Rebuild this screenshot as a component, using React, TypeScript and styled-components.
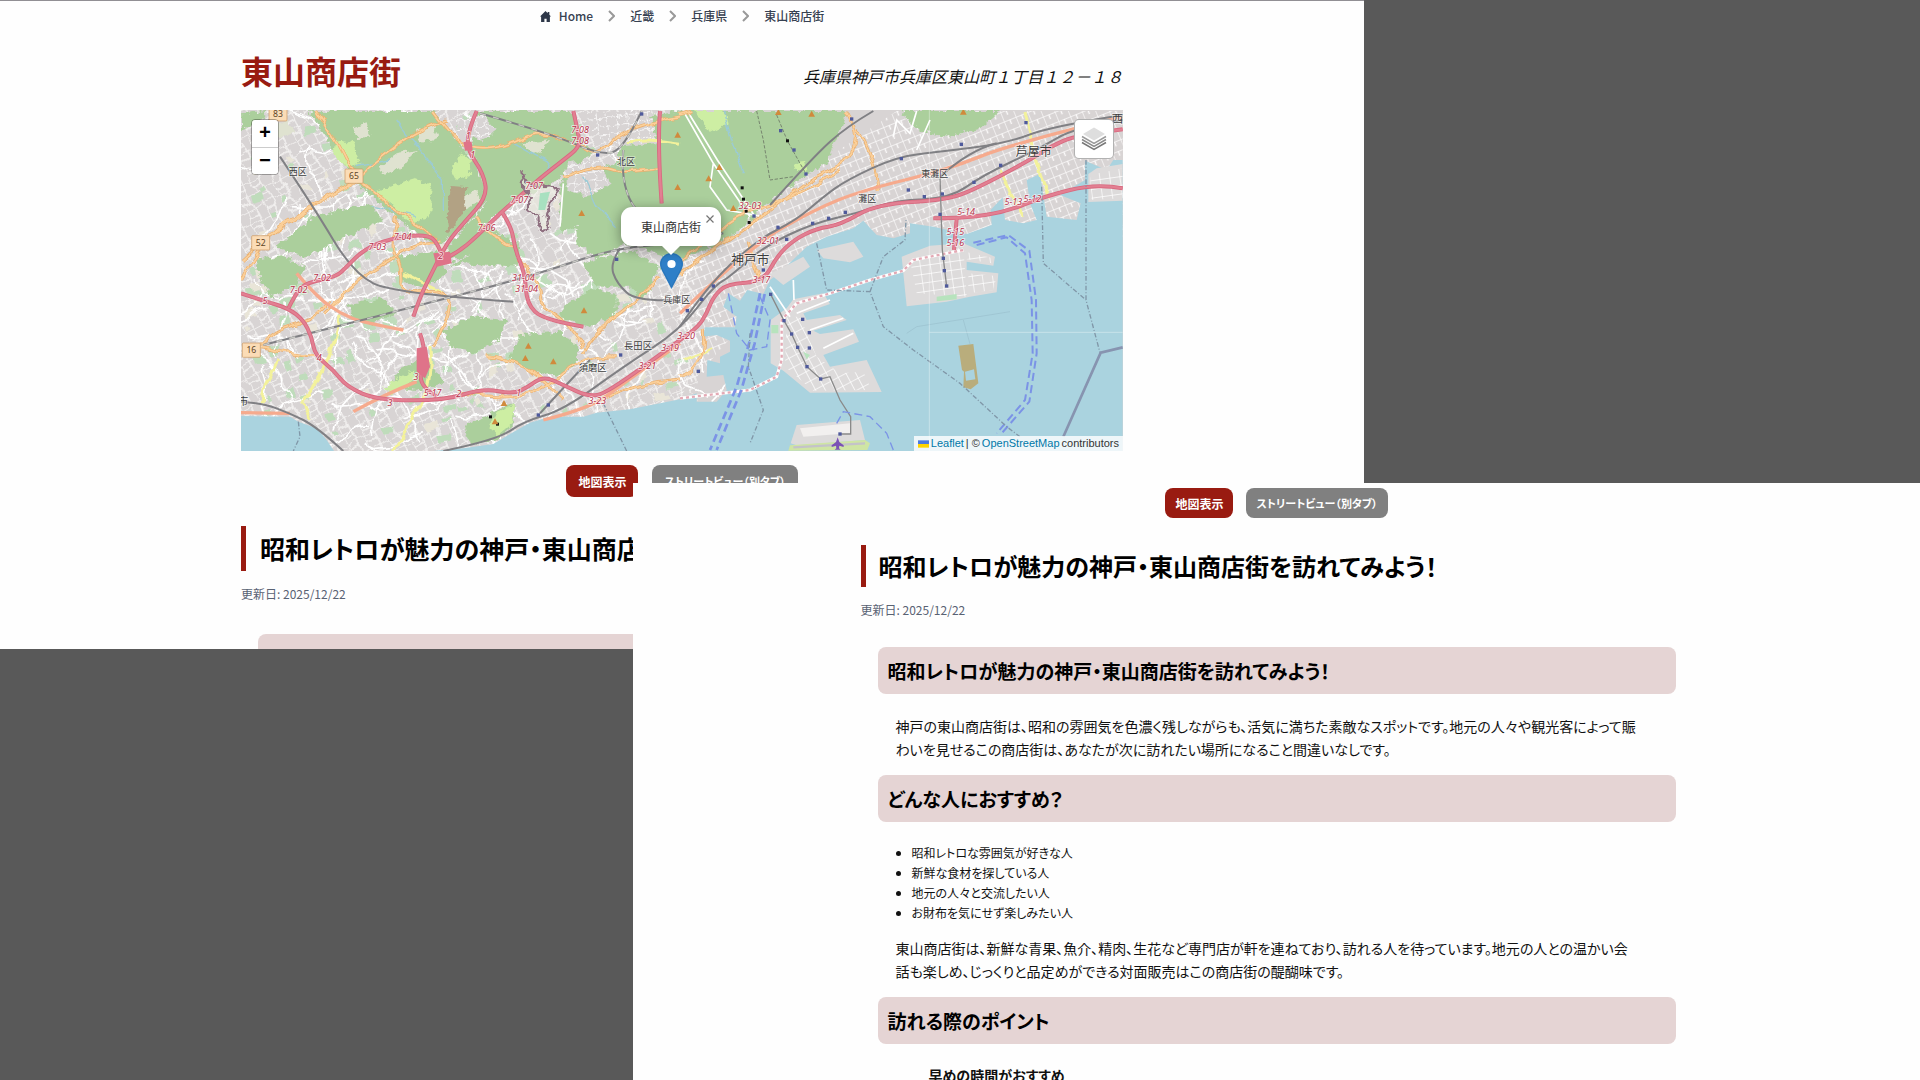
import React from "react";
import styled, { createGlobalStyle } from "styled-components";

const JP = `"Noto Sans CJK JP", "Noto Sans", sans-serif`;
const BRAND = "#991b11";

const GlobalStyle = createGlobalStyle`
  *, *::before, *::after { box-sizing: border-box; }
  body {
    margin: 0;
    background: #595959;
    color: #111;
    font-family: ${JP};
    font-feature-settings: "palt";
    line-break: strict;
  }
  h1, h2, h3, h4, p, ul, ol { margin: 0; padding: 0; }
  a { color: inherit; text-decoration: none; }
`;

/* Two overlapping page panes on a dark board */
const Board = styled.main`
  display: grid;
  height: 100vh;
  grid-template-columns: minmax(0, 633fr) minmax(0, 731fr) minmax(0, 556fr);
  grid-template-rows: minmax(0, 483fr) minmax(0, 166fr) minmax(0, 431fr);
`;

const Pane = styled.section<{ $front?: boolean }>`
  grid-column: ${(p) => (p.$front ? "2 / 4" : "1 / 3")};
  grid-row: ${(p) => (p.$front ? "2 / 4" : "1 / 3")};
  z-index: ${(p) => (p.$front ? 1 : 0)};
  overflow: hidden;
  background: #fefefe;
  border-top: ${(p) => (p.$front ? "0" : "1px solid #918f94")};
  padding-top: 5px;
`;

const Column = styled.div<{ $wide?: boolean }>`
  max-width: ${(p) => (p.$wide ? 882 : 832)}px;
  margin: 0 auto;
`;

const Crumbs = styled.ol`
  display: flex;
  justify-content: center;
  align-items: center;
  gap: 15px;
  list-style: none;
  font-size: 12px;
  line-height: 20px;
  font-weight: 500;
  color: #374151;
`;

const Crumb = styled.li`
  display: flex;
  align-items: center;
  gap: 15px;
  a { display: flex; align-items: center; gap: 8px; }
  svg { display: block; }
`;

const TitleRow = styled.header`
  display: flex;
  justify-content: space-between;
  align-items: flex-end;
  margin: 20px 0 16px;
`;

const PlaceName = styled.h1`
  font-size: 32px;
  line-height: 48px;
  font-weight: 700;
  color: ${BRAND};
`;

const Address = styled.address`
  font-size: 16px;
  line-height: 36px;
  font-feature-settings: normal;
`;

const MapFrame = styled.div`
  position: relative;
  height: 341px;
  overflow: hidden;
  background: #aad3df;
`;

const MapArt = styled.svg`
  display: block;
  width: 100%;
  height: 100%;
`;

const ZoomBar = styled.div`
  position: absolute;
  left: 10px;
  top: 9px;
  display: flex;
  flex-direction: column;
  border: 1px solid rgba(0, 0, 0, 0.3);
  border-radius: 4px;
  overflow: hidden;
`;

const ZoomButton = styled.button`
  width: 26px;
  height: 27px;
  padding: 0;
  border: 0;
  background: #fff;
  font: bold 20px/28px "Liberation Mono", monospace;
  color: #000;
  & + & { border-top: 1px solid #ccc; }
`;

const LayersButton = styled.button`
  position: absolute;
  right: 9px;
  top: 9px;
  width: 40px;
  height: 40px;
  padding: 0;
  display: grid;
  place-items: center;
  background: #fff;
  border: 1px solid rgba(0, 0, 0, 0.3);
  border-radius: 5px;
`;

/* Anchored to the marker's point on the map */
const Popup = styled.div`
  position: absolute;
  left: 430px;
  top: 97px;
  transform: translateX(-50%);
  width: 100px;
  height: 39px;
  border-radius: 11px;
  background: #fff;
  box-shadow: 0 3px 13px rgba(0, 0, 0, 0.4);
  display: grid;
  place-items: center;
  font-size: 12px;
  line-height: 16px;
  color: #333;
  &::after {
    content: "";
    position: absolute;
    left: 50%;
    top: 100%;
    margin-left: -9px;
    border: 9px solid transparent;
    border-top-color: #fff;
    border-bottom: 0;
  }
`;

const PopupClose = styled.button`
  position: absolute;
  right: 2px;
  top: 3px;
  width: 18px;
  height: 18px;
  padding: 0;
  border: 0;
  background: none;
  display: grid;
  place-items: center;
`;

const Pin = styled.svg`
  position: absolute;
  left: 419px;
  top: 143px;
`;

const Attribution = styled.div`
  position: absolute;
  right: 0;
  bottom: 0;
  display: flex;
  align-items: center;
  gap: 2px;
  height: 15px;
  padding: 0 4px;
  background: rgba(255, 255, 255, 0.8);
  font: 11px/15px "Liberation Sans", Arial, sans-serif;
  color: #333;
  a { color: #0078a8; }
`;

const Actions = styled.div<{ $wide?: boolean }>`
  display: flex;
  justify-content: center;
  gap: ${(p) => (p.$wide ? 14 : 13)}px;
  margin-top: ${(p) => (p.$wide ? 14 : 0)}px;
`;

const action = `
  display: flex;
  align-items: center;
  justify-content: center;
  border: 0;
  border-radius: 8px;
  color: #fff;
  font-family: inherit;
  font-weight: 700;
  font-feature-settings: inherit;
`;

const ShowMap = styled.button<{ $wide?: boolean }>`
  ${action}
  background: ${BRAND};
  height: ${(p) => (p.$wide ? 32 : 30)}px;
  padding: 0 ${(p) => (p.$wide ? 12 : 10)}px;
  font-size: 12px;
`;

const StreetView = styled.a<{ $wide?: boolean }>`
  ${action}
  background: #808080;
  height: ${(p) => (p.$wide ? 32 : 30)}px;
  padding: 0 ${(p) => (p.$wide ? 12 : 10)}px;
  font-size: 11px;
`;

const ArticleTitle = styled.h2<{ $wide?: boolean }>`
  margin-top: ${(p) => (p.$wide ? 29 : 27)}px;
  border-left: 5px solid ${BRAND};
  padding-left: ${(p) => (p.$wide ? 14 : 13)}px;
  font-size: ${(p) => (p.$wide ? 25 : 24)}px;
  line-height: ${(p) => (p.$wide ? 45 : 42)}px;
  font-weight: 700;
  color: #000;
  white-space: nowrap;
`;

const Updated = styled.p<{ $wide?: boolean }>`
  margin: 14px 0 ${(p) => (p.$wide ? 31 : 28)}px;
  font-size: 12px;
  line-height: 18px;
  color: #596273;
`;

const Body = styled.div`
  padding: 0 17px;
`;

const Band = styled.h3<{ $wide?: boolean }>`
  margin-bottom: 21px;
  padding: 0 10px;
  border-radius: 8px;
  background: #e5d4d4;
  font-size: 19px;
  line-height: ${(p) => (p.$wide ? 50 : 47)}px;
  font-weight: 700;
  color: #000;
`;

const Para = styled.p`
  margin: 0 18px 14px;
  font-size: 14px;
  line-height: 23px;
`;

const Bullets = styled.ul`
  margin: 0 18px 14px;
  padding-left: 16px;
  font-size: 12px;
  line-height: 20px;
`;

const Tip = styled.h4`
  margin-left: 51px;
  font-size: 14px;
  line-height: 21px;
  font-weight: 700;
`;

const chevron = (
  <svg width="7" height="12" viewBox="0 0 7 12" fill="none" stroke="#999" strokeWidth="2">
    <path d="M1 1l5 5-5 5" />
  </svg>
);

/* ---- map drawing ---- */

const LAND_WATER =
  "M33 948L180 950 205 965 260 985 290 1020 312 1053H33Z M610 1053L700 1045 790 1032 840 1002 900 968 960 950 1060 950 1100 938 1200 928 1350 898 1400 880V905H1460L1490 870 1480 825 1430 830 1432 780 1470 790V770L1500 755V722L1460 705 1420 710 1425 682H1515L1520 650 1480 620 1495 580 1530 602 1552 570 1600 582 1620 540 1650 518 1680 488 1730 440 1790 410 1870 385 1900 362 1940 405 1990 415 2040 400V370L2110 380 2210 402 2285 375 2282 330 2318 292 2325 360 2380 370 2420 360 2400 310 2390 240 2430 222 2450 350 2540 360 2552 310 2490 285 2565 240V182L2630 210 2650 180H2678V1053Z";

const ISLANDS = [
  "M2575 222L2600 205 2678 192V302L2575 306Z",
  "M2015 470L2100 437 2200 430 2295 470 2290 497 2210 485V510L2305 520 2300 577 2220 590 2150 605 2030 619Z",
  "M1760 450L1870 425 1900 470 1860 487 1780 475Z",
  "M1620 522L1720 470 1740 500 1660 555Z",
  "M1622 660L1670 625 1690 598 1780 580 1800 612 1720 640 1730 660 1830 645 1850 660 1750 692 1770 702 1870 688 1887 725 1780 765 1800 800 1910 780 1955 876 1740 878 1660 812 1622 790Z",
  "M1700 975L1890 960 1905 1020 1700 1036 1682 1030Z",
];

const FOREST = [
  "M235 33L610 33 690 130 750 220 768 300 700 385 622 440 520 372 470 330 370 240 300 130Z",
  "M740 33H1020L1045 110 1090 160 1000 220 960 260 870 290 760 375 850 425 660 480 648 445 768 312 750 200 722 150Z",
  "M995 240L1160 190 1200 60 1350 33H1850L1830 95 1790 185 1650 280 1590 330 1530 390 1420 450 1350 480 1180 430 1100 480 1040 430V380L990 400Z",
  "M2015 33H2310L2250 85 2150 110 2070 92 2035 62Z",
  "M870 702L990 695 1045 740 1040 790 980 830 890 810 840 770Z",
  "M1000 622L1080 570 1160 582V640L1080 682 990 650Z",
  "M75 485L150 465 222 500 200 560 125 592 88 530Z",
  "M355 612L460 595 500 640 420 672 370 655Z",
  "M705 980L800 930 855 908 848 980 800 1022 720 1030Z",
  "M250 350L420 310 460 360 330 420 230 470 140 440Z",
  "M500 470L620 452 650 520 600 560 520 550Z",
  "M640 690L720 650 830 660 800 720 740 760 660 740Z",
  "M1060 490L1200 450 1290 500 1240 600 1200 560 1100 560Z",
  "M520 800L590 770 640 850 560 870 480 860Z",
  "M650 500L780 430 870 430 860 500 700 490Z",
  "M33 40L110 33 90 70 33 90Z",
];

const GOLF = [
  "M430 275L560 235 608 262 600 350 540 372 500 330Z",
  "M320 120L370 130 385 190 350 205 310 160Z",
  "M690 160L722 180 720 225 680 240 668 215Z",
  "M460 860L545 815 560 840 480 885Z",
  "M1395 33H1480L1490 70 1440 95Z",
  "M1690 190L1725 185 1730 215 1695 212Z",
  "M800 935L855 912 845 975 805 1010 778 985Z",
];

const CLEARINGS = [
  "M450 200L500 160 560 150 520 200 460 225Z",
  "M560 90L610 75 625 110 570 130Z",
  "M700 290L740 270 750 300 705 330Z",
  "M880 130L960 120 930 160 900 150Z",
  "M100 90L170 60 190 100 130 120Z",
  "M370 85L410 70 420 110 380 115Z",
];

const MOTORWAYS = [
  "M740 33L715 90 712 150 760 220 772 290 700 370 650 430 610 510 570 590 550 650",
  "M1030 33L1045 100 1050 140 1000 180 930 235 880 280 815 335 740 410 680 460 640 478",
  "M640 478L625 430 590 402 480 415 400 450 350 500 320 530 230 548 200 575 175 625",
  "M33 580L100 602 175 625 220 660 245 710 255 765 310 810 350 860 440 900 640 902 760 865 850 882 895 860 940 828 1000 855 1075 890 1130 880 1350 720 1405 680 1430 640 1450 590 1490 552 1600 545 1640 470 1690 420 1760 385 1830 375 1940 312 2150 300 2240 265 2400 180 2460 140 2540 105 2678 88",
  "M815 335L845 380 855 450 885 520 890 610 940 660 1060 680",
  "M1290 33L1282 130 1295 310",
  "M2110 355L2200 355 2330 335 2440 290 2600 250 2678 265",
  "M2180 355L2172 450",
  "M570 700L585 740 575 800 570 840 590 870 620 890",
];

const TRUNKS = [
  "M200 520L260 590 330 640 400 668 520 690",
  "M33 938L180 940",
  "M940 960L1080 925 1180 850 1350 730",
  "M1350 640L1560 440 1750 330 1900 270 2150 210 2350 130 2678 50",
  "M370 935L460 885 560 845",
];

const PRIMARIES = [
  "M260 33L320 120 370 225 450 295 510 345 580 380 625 425",
  "M33 540L90 430 190 350 370 250 410 205 480 150 560 90 650 60",
  "M33 480L95 420 250 320",
  "M610 33L660 100 720 150 830 140 930 90 1030 130 1110 170 1180 80 1350 50",
  "M1000 230L1100 190 1190 220 1290 200",
  "M280 640L380 540 480 480 560 430 640 430",
  "M90 735L130 690 250 660 300 600",
  "M500 350L480 440 515 500 510 580 650 570 665 640 610 740",
  "M95 740L250 770",
  "M680 875L850 905 960 850 1070 770 1160 770",
  "M770 770L860 780 940 840 1000 900",
  "M740 350L760 400 860 440",
  "M870 480L940 560 920 610 1010 660 1060 740",
  "M1060 760L1110 680 1200 620 1290 530",
  "M1350 520L1480 430 1620 330 1750 230 1850 190 1890 100 1850 33",
  "M1350 490L1500 350 1700 290 1830 210",
  "M1350 44L1390 33",
  "M1880 90L1930 150 1945 270",
  "M1420 690L1430 800 1350 830",
  "M1555 430L1590 540",
  "M1110 900L1230 850 1350 840",
];

const YELLOWS = [
  "M330 650L325 760 215 905",
  "M150 780L95 850 97 910",
  "M600 740L605 850 550 950 490 1050",
  "M215 905L240 960",
  "M520 520L640 580",
  "M1190 130L1230 110 1350 130",
  "M2385 33L2400 110 2430 240 2460 290",
  "M1360 780L1450 745",
  "M2310 210L2380 350",
];

const RAILS = [
  "M150 170L250 320 370 520 490 580 850 605",
  "M100 735L400 660 550 620 900 530 1150 445 1350 430 1480 400",
  "M33 905L100 910 180 940 260 980 340 1053",
  "M640 1053L800 1020 880 965 1000 930 1180 800 1350 690 1450 560 1500 530 1600 440 1750 370 1880 340 2000 300 2160 295 2260 225 2420 150 2540 80 2678 60",
  "M750 40L960 100 1110 165 1180 150 1235 33",
  "M1180 150L1170 270 1220 330",
  "M1350 680L1430 560 1580 420 1700 360 1780 290 1850 240 2000 170 2130 155 2330 130 2460 80 2678 45",
  "M1620 315L1750 170 1850 80 1930 33",
  "M1170 445L1140 490 1160 550 1220 605 1340 600",
  "M930 940L1040 820 1080 780",
  "M2130 230L2220 150 2300 130",
];

const STATION_DOTS: [number, number][] = [
  [1865, 57], [1728, 222], [1692, 150], [1652, 92], [2014, 176], [2194, 133], [2035, 270], [2137, 282], [2083, 290],
  [1644, 382], [1748, 370], [1670, 418], [1572, 348], [2130, 343], [2140, 475], [2143, 512], [2150, 558], [1622, 583],
  [1662, 662], [1718, 658], [1685, 702], [1738, 698], [1703, 742], [1738, 744], [1731, 800], [1772, 837], [1830, 1002],
  [1405, 814], [1372, 632], [1450, 558], [1600, 510], [2312, 196], [2232, 247], [2388, 68], [1160, 478], [1235, 42],
  [1172, 765], [955, 915], [925, 945], [1846, 337], [1796, 355], [1415, 598], [1103, 165],
];

const PEAKS: [number, number][] = [
  [1343, 105], [1343, 262], [1645, 37], [1745, 42], [2200, 36], [1468, 202], [1436, 236], [1510, 325], [1055, 340],
  [895, 738], [886, 775], [970, 785], [1062, 632], [822, 910], [795, 965],
];

const PLACES: [string, number, number, number][] = [
  ["西区", 203, 226, 27],
  ["北区", 1188, 194, 27],
  ["兵庫区", 1340, 610, 27],
  ["長田区", 1224, 747, 28],
  ["須磨区", 1088, 814, 28],
  ["神戸市", 1561, 492, 38],
  ["灘区", 1912, 305, 27],
  ["東灘区", 2114, 232, 27],
  ["芦屋市", 2411, 168, 36],
  ["西", 2662, 70, 34],
  ["市", 40, 914, 30],
];

const EXITS: [string, number, number][] = [
  ["7-08", 1050, 99], ["7-08", 1050, 133], ["7-07", 912, 266], ["7-07", 868, 309], ["7-06", 770, 392],
  ["7-04", 518, 421], ["7-03", 442, 450], ["7-02", 276, 544], ["7-02", 206, 578], ["31-04", 880, 543],
  ["31-04", 890, 577], ["5-17", 608, 888], ["3-23", 1102, 913], ["3-21", 1252, 808], ["3-19", 1320, 752],
  ["3-20", 1368, 717], ["3-17", 1594, 548], ["32-01", 1614, 433], ["32-03", 1560, 326], ["5-12", 2407, 306],
  ["5-13", 2350, 314], ["5-14", 2208, 346], ["5-15", 2176, 404], ["5-16", 2176, 437],
  ["5", 105, 613], ["4", 268, 782], ["3", 480, 918], ["3", 558, 840], ["2", 686, 892], ["1", 866, 887], ["2", 632, 476], ["1", 715, 118], ["1", 728, 175],
];

const SHIELDS: [string, number, number][] = [
  ["83", 144, 42], ["65", 372, 229], ["52", 92, 429], ["16", 64, 751],
];

function seeded(seed: number) {
  let s = seed;
  return () => {
    s = (s * 1664525 + 1013904223) % 4294967296;
    return s / 4294967296;
  };
}

/* Rounds the corners of a polyline by running curves through its midpoints */
function smooth(d: string) {
  const n = (d.match(/-?\d+/g) || []).map(Number);
  const pts: [number, number][] = [];
  for (let i = 0; i + 1 < n.length; i += 2) pts.push([n[i], n[i + 1]]);
  if (pts.length < 3) return d;
  let out = `M${pts[0][0]} ${pts[0][1]}`;
  for (let i = 1; i < pts.length - 1; i++) {
    const last = i === pts.length - 2;
    const ex = last ? pts[i + 1][0] : (pts[i][0] + pts[i + 1][0]) / 2;
    const ey = last ? pts[i + 1][1] : (pts[i][1] + pts[i + 1][1]) / 2;
    out += `Q${pts[i][0]} ${pts[i][1]} ${ex} ${ey}`;
  }
  return out;
}

/* Winding local lanes scattered over the inland districts */
function lanes(count: number, seed: number, x0: number, y0: number, x1: number, y1: number, step: number) {
  const r = seeded(seed);
  let d = "";
  for (let i = 0; i < count; i++) {
    let x = x0 + r() * (x1 - x0);
    let y = y0 + r() * (y1 - y0);
    let a = r() * Math.PI * 2;
    d += `M${x.toFixed(0)} ${y.toFixed(0)}`;
    for (let k = 0; k < 7; k++) {
      a += (r() - 0.5) * 1.3;
      x += Math.cos(a) * step;
      y += Math.sin(a) * step;
      d += `L${x.toFixed(0)} ${y.toFixed(0)}`;
    }
  }
  return d;
}

function patches(count: number, seed: number) {
  const r = seeded(seed);
  let d = "";
  for (let i = 0; i < count; i++) {
    const x = 40 + r() * 1300;
    const y = 40 + r() * 980;
    const w = 10 + r() * 26;
    const h = 8 + r() * 22;
    d += `M${x.toFixed(0)} ${y.toFixed(0)}l${w.toFixed(0)} -6l6 ${h.toFixed(0)}l-${w.toFixed(0)} 8z`;
  }
  return d;
}

const Strokes = ({ paths, color, width, dash }: { paths: string[]; color: string; width: number; dash?: string }) => (
  <g fill="none" stroke={color} strokeWidth={width} strokeDasharray={dash} strokeLinejoin="round">
    {paths.map((d) => (
      <path key={d} d={smooth(d)} />
    ))}
  </g>
);

const CityMap = () => (
  <MapArt viewBox="33 30 2646 1023" preserveAspectRatio="xMidYMid slice" role="img" aria-label="神戸市周辺の地図">
    <defs>
      <pattern id="blocksA" width="58" height="40" patternUnits="userSpaceOnUse" patternTransform="rotate(-28)">
        <path d="M0 0H58M0 20H29M0 0V40M29 0V40" stroke="#f6f5f4" strokeWidth="4" fill="none" />
      </pattern>
      <pattern id="blocksB" width="38" height="30" patternUnits="userSpaceOnUse" patternTransform="rotate(-22)">
        <path d="M0 0H38M0 0V30M19 0V15" stroke="#fbfafa" strokeWidth="4" fill="none" />
      </pattern>
      <pattern id="blocksC" width="30" height="26" patternUnits="userSpaceOnUse" patternTransform="rotate(-8)">
        <path d="M0 0H30M0 0V26" stroke="#fff" strokeWidth="4" fill="none" />
      </pattern>
      <pattern id="blocksD" width="30" height="26" patternUnits="userSpaceOnUse" patternTransform="rotate(62)">
        <path d="M0 0H30M0 0V26" stroke="#fff" strokeWidth="4" fill="none" />
      </pattern>
      <filter id="organic" x="-5%" y="-5%" width="110%" height="110%">
        <feTurbulence type="fractalNoise" baseFrequency="0.05" numOctaves="3" seed="4" />
        <feDisplacementMap in="SourceGraphic" scale="26" xChannelSelector="R" yChannelSelector="G" />
      </filter>
      <filter id="wavy" x="-5%" y="-5%" width="110%" height="110%">
        <feTurbulence type="fractalNoise" baseFrequency="0.022" numOctaves="2" seed="9" />
        <feDisplacementMap in="SourceGraphic" scale="26" xChannelSelector="R" yChannelSelector="G" />
      </filter>
    </defs>

    <rect x="33" y="30" width="2646" height="1023" fill="#d8d4d4" />
    <g filter="url(#wavy)">
      <path d="M20 20H1400V1070H20Z" fill="url(#blocksA)" />
      <path d={patches(190, 5)} fill="#bfdcbb" />
      <path d={patches(80, 21)} fill="#e9e5d8" />
      <path d={lanes(150, 11, 33, 30, 1380, 1040, 26)} fill="none" stroke="#fff" strokeWidth="5" />
    </g>
    <path d="M1340 900V480L1600 310 1900 100 2000 33H2678V420L1900 420 1600 600Z" fill="url(#blocksB)" />

    <g filter="url(#organic)">
      <g fill="#abcf9c">
        {FOREST.map((d) => (
          <path key={d} d={d} />
        ))}
      </g>
      <g fill="#cdeea3">
        {GOLF.map((d) => (
          <path key={d} d={d} />
        ))}
      </g>
      <g fill="#dfe2d0">
        {CLEARINGS.map((d) => (
          <path key={d} d={d} />
        ))}
      </g>
      <path d="M665 258L712 262 706 320 680 370 655 400 650 330Z" fill="#b2a284" />
      <path d="M1070 40L1260 33 1280 130 1150 140 1080 90Z M1010 190L1110 180 1140 250 1080 290 1010 270Z M670 60L760 50 800 90 760 120 700 110Z" fill="#d8d4d4" />
      <path d="M1070 40L1260 33 1280 130 1150 140 1080 90Z M1010 190L1110 180 1140 250 1080 290 1010 270Z M670 60L760 50 800 90 760 120 700 110Z" fill="url(#blocksC)" />
    </g>

    <path d={LAND_WATER} fill="#aad3df" />
    <g fill="#dddbdb">
      {ISLANDS.map((d) => (
        <path key={d} d={d} />
      ))}
    </g>
    <path d="M1670 650L1710 650 1760 770 1830 820 1900 815 1925 870 1750 872 1665 800Z" fill="url(#blocksD)" />
    <path d="M2040 480L2200 440 2210 590 2060 580Z M2215 520L2300 528 2290 570 2215 580Z M2580 225L2678 205V295L2585 300Z M2205 455L2290 475 2285 490 2210 478Z" fill="url(#blocksC)" />
    <path d="M1680 1036L1905 1020 1920 1030 1912 1050 1675 1052Z" fill="#cfe5a4" />
    <path d="M1690 1042L1905 1030" stroke="#c4c3c9" strokeWidth="7" />
    <path d="M1710 985L1860 970V1000L1720 1010Z" fill="#f2f0ef" />
    <path d="M2185 737L2230 732 2245 850 2222 868 2200 862 2202 815 2196 810Z" fill="#b9ad7c" />
    <path d="M2205 815L2232 808 2236 838 2208 842Z" fill="#aad3df" />
    <path d="M2120 590L2180 582V598L2120 604Z M1720 755L1740 765 1730 778Z M1624 675L1645 675V700H1624Z" fill="#b7e3bd" />

    <g fill="none" stroke="#fff" strokeWidth="5">
      <path d="M1690 540L1692 600M1620 560L1680 650M1800 600L1700 640M1740 690L1840 655M1780 745L1870 700" />
      <path d="M1360 33L1450 190 1560 350 M1372 33L1462 180 1572 345M1450 190L1440 260 1490 330 1600 350M1990 110L2000 60 2040 100 2060 33M2060 150L2100 60" />
      <path d="M960 400L990 420 1040 430M860 500L960 510 1010 540 1030 590M1000 250L990 380" />
    </g>
    <path d="M1350 895L1560 870 1640 830 1655 780V660L1700 610 1800 580 1920 540 2020 512 2050 480 2200 450" fill="none" stroke="#fff" strokeWidth="9" />
    <path d="M1350 895L1560 870 1640 830 1655 780V660L1700 610 1800 580 1920 540 2020 512 2050 480 2200 450" fill="none" stroke="#e3a9b4" strokeWidth="7" strokeDasharray="9 9" />

    <g fill="none" stroke="#9bcbd6" strokeWidth="4" filter="url(#wavy)">
      <path d="M500 60L560 140 640 240 640 330M850 130L960 190 940 230M1060 230L1100 320 1160 380M1480 33L1500 100 1540 220M380 200L480 180M420 320L560 350" />
    </g>

    <g filter="url(#wavy)">
      <Strokes paths={YELLOWS} color="#f3f29b" width={9} />
      <Strokes paths={PRIMARIES} color="#eaae6c" width={9} />
      <Strokes paths={PRIMARIES} color="#fbd09a" width={5} />
    </g>
    <Strokes paths={TRUNKS} color="#f6aa8d" width={10} />
    <Strokes paths={RAILS} color="#808084" width={6} />
    <Strokes paths={RAILS.slice(1, 2)} color="#c9c9c4" width={4} dash="18 22" />
    <Strokes paths={RAILS.slice(4, 6)} color="#c9c9c4" width={4} dash="18 22" />
    <Strokes paths={MOTORWAYS} color="#d8697f" width={12} />
    <Strokes paths={MOTORWAYS} color="#e27f92" width={7} />
    <path d="M560 745L590 740 600 800 585 835 560 815Z M610 460L660 455 665 490 620 500Z M700 125L725 125 728 150 705 152Z" fill="#df7389" />
    <path d="M1622 583L1662 662 1685 702 1703 742 1731 800 1772 837 1800 830 1830 900 1862 950V1002H1830M2130 230L2137 450 2150 560" fill="none" stroke="#8a8a8a" strokeWidth="4" />

    <path d="M875 220L905 262 960 255 985 270 960 310 950 345 955 385 930 392 925 350 890 325 905 290 880 265Z" fill="#e9eadf" fillOpacity=".7" stroke="#8f6f80" strokeWidth="7" filter="url(#organic)" />
    <path d="M930 280L960 275 945 330 925 330Z" fill="#a8e0c0" />

    <g fill="none" stroke="#7b93e6" strokeWidth="8" strokeDasharray="24 13">
      <path d="M1590 580L1560 720 1520 860 1440 1050M1604 582L1574 730 1534 870 1460 1050" />
      <path d="M2240 435L2330 412 2385 460 2405 600 2408 760 2385 900 2300 1000M2230 428L2335 405 2398 452 2418 600 2420 760 2398 905 2315 1000" strokeWidth="6" />
      <path d="M1495 580L1520 700 1560 750 1610 740 1620 660 1590 590M1820 970L1840 935 1920 950 1970 1000 1990 1050" strokeWidth="4" />
    </g>
    <g fill="none" stroke="#8097a8" strokeWidth="4" strokeDasharray="14 6 3 6">
      <path d="M2435 260L2440 490 2568 600M2568 180V600L2610 758M1760 430L1790 570 1920 575 1960 680 2050 750 2190 850 2330 980 2370 1010M1920 575L1960 470 2025 420 2028 360M1560 700L1555 800 1600 930 1560 1030M1120 910L1190 1053M205 965L210 1010 190 1053" />
    </g>
    <path d="M2678 742L2612 758 2500 1010" fill="none" stroke="#8794b0" strokeWidth="8" />
    <path d="M2030 700L2060 680 2340 635M2200 660L2220 732" fill="none" stroke="#9abfcd" strokeWidth="2" />
    <path d="M2098 30V1053M2098 697H2678" stroke="#fff" strokeOpacity=".35" strokeWidth="3" />
    <path d="M1580 33L1600 120 1620 240 1690 230M1640 45L1672 122 1728 222" fill="none" stroke="#77866f" strokeWidth="3" strokeDasharray="10 5" />

    <g fill="#4f5a9c">
      {STATION_DOTS.map(([x, y]) => (
        <rect key={`${x}-${y}`} x={x - 5} y={y - 5} width="10" height="10" />
      ))}
    </g>
    <g fill="#111">
      {[[1672, 122], [1536, 263], [1540, 297], [1548, 333], [1557, 367], [781, 950], [802, 972]].map(([x, y]) => (
        <rect key={`${x}-${y}`} x={x - 4} y={y - 4} width="9" height="9" />
      ))}
    </g>
    <g fill="#d08a3c">
      {PEAKS.map(([x, y]) => (
        <path key={`${x}-${y}`} d={`M${x} ${y - 10}l10 18h-20z`} />
      ))}
    </g>
    <path d="M1823 1012l5 14 13 10v5l-13-4-1 8 5 4h-18l5-4-1-8-13 4v-5l13-10z" fill="#7b52b5" />

    <g fontFamily="Noto Sans CJK JP, sans-serif" textAnchor="middle" fill="#3d3d3d" stroke="#fff" strokeOpacity=".6" strokeWidth="5" paintOrder="stroke">
      {PLACES.map(([name, x, y, size]) => (
        <text key={name} x={x} y={y} fontSize={size}>
          {name}
        </text>
      ))}
    </g>
    <g fontFamily="Noto Sans, sans-serif" fontStyle="italic" fontSize="27" textAnchor="middle" fill="#b8324c" stroke="#fff" strokeOpacity=".7" strokeWidth="5" paintOrder="stroke">
      {EXITS.map(([name, x, y]) => (
        <text key={`${name}-${x}`} x={x} y={y}>
          {name}
        </text>
      ))}
    </g>
    <g fontFamily="Noto Sans, sans-serif" fontSize="26" textAnchor="middle">
      {SHIELDS.map(([name, x, y]) => (
        <g key={name}>
          <rect x={x - 27} y={y - 22} width="54" height="43" rx="3" fill="#fbdcb6" stroke="#c9965e" strokeWidth="2" />
          <text x={x} y={y + 9} fill="#5e4426">
            {name}
          </text>
        </g>
      ))}
    </g>
  </MapArt>
);

const LeafletMap = () => (
  <MapFrame>
    <CityMap />
    <ZoomBar>
      <ZoomButton aria-label="ズームイン">+</ZoomButton>
      <ZoomButton aria-label="ズームアウト">−</ZoomButton>
    </ZoomBar>
    <LayersButton aria-label="レイヤー">
      <svg width="26" height="26" viewBox="0 0 26 26">
        <path d="M1 16.500L13 23.500 25 16.500" fill="none" stroke="#777" strokeWidth="1.500" />
        <path d="M1 13.500L13 20.500 25 13.500" fill="none" stroke="#8b8b8b" strokeWidth="1.500" />
        <path d="M1 10.500L13 17.500 25 10.500" fill="none" stroke="#9a9a9a" strokeWidth="1.500" />
        <path d="M13 1.500l11 6.500-11 6.500L2 8z" fill="#dedede" />
      </svg>
    </LayersButton>
    <Pin width="23" height="36" viewBox="0 0 25 41" preserveAspectRatio="none">
      <path d="M12.500 0C5.600 0 0 5.600 0 12.500c0 2.400 1 5.200 2 7.400L12.500 41 23 19.900c1-2.200 2-5 2-7.400C25 5.600 19.400 0 12.500 0z" fill="#2e7fc8" />
      <path d="M12.500 1C6.200 1 1 6.200 1 12.500c0 2.200.9 4.900 1.900 6.900L12.500 38.700l9.600-19.300c1-2 1.900-4.700 1.900-6.900C24 6.200 18.800 1 12.500 1z" fill="none" stroke="#2a74b5" strokeWidth="1" />
      <circle cx="12.500" cy="12.500" r="4.500" fill="#fff" />
    </Pin>
    <Popup>
      東山商店街
      <PopupClose aria-label="閉じる">
        <svg width="8" height="8" viewBox="0 0 8 8" stroke="#757575" strokeWidth="1.200">
          <path d="M0.500 0.500l7 7M7.500 0.500l-7 7" />
        </svg>
      </PopupClose>
    </Popup>
    <Attribution>
      <svg width="11" height="8" viewBox="0 0 12 8">
        <path fill="#4c7be1" d="M0 0h12v4H0z" />
        <path fill="#ffd500" d="M0 4h12v4H0z" />
      </svg>
      <a href="#leaflet">Leaflet</a>
      <span>| ©</span>
      <a href="#osm">OpenStreetMap</a>
      <span>contributors</span>
    </Attribution>
  </MapFrame>
);

const HEADLINE = "昭和レトロが魅力の神戸・東山商店街を訪れてみよう！";

const ArticleHead = ({ wide }: { wide?: boolean }) => (
  <>
    <Actions $wide={wide}>
      <ShowMap $wide={wide}>地図表示</ShowMap>
      <StreetView $wide={wide} href="#streetview">
        ストリートビュー（別タブ）
      </StreetView>
    </Actions>
    <ArticleTitle $wide={wide}>{HEADLINE}</ArticleTitle>
    <Updated $wide={wide}>更新日: 2025/12/22</Updated>
  </>
);

export default function App() {
  return (
    <>
      <GlobalStyle />
      <Board>
        <Pane>
          <Crumbs>
            <Crumb>
              <a href="#home">
                <svg width="11" height="11" viewBox="0 0 20 20" fill="#2d3748">
                  <path d="M10 0L0 10h2v10h6v-6h4v6h6V10h2l-3-3V2h-3v2z" />
                </svg>
                Home
              </a>
            </Crumb>
            {["近畿", "兵庫県", "東山商店街"].map((name) => (
              <Crumb key={name}>
                {chevron}
                <a href={`#${name}`}>{name}</a>
              </Crumb>
            ))}
          </Crumbs>
          <Column $wide>
            <TitleRow>
              <PlaceName>東山商店街</PlaceName>
              <Address>兵庫県神戸市兵庫区東山町１丁目１２－１８</Address>
            </TitleRow>
            <LeafletMap />
            <ArticleHead wide />
            <Body>
              <Band $wide>{HEADLINE}</Band>
            </Body>
          </Column>
        </Pane>
        <Pane $front>
          <Column>
            <ArticleHead />
            <Body>
              <Band>{HEADLINE}</Band>
              <Para>
                神戸の東山商店街は、昭和の雰囲気を色濃く残しながらも、活気に満ちた素敵なスポットです。地元の人々や観光客によって賑
                <br />
                わいを見せるこの商店街は、あなたが次に訪れたい場所になること間違いなしです。
              </Para>
              <Band>どんな人におすすめ？</Band>
              <Bullets>
                <li>昭和レトロな雰囲気が好きな人</li>
                <li>新鮮な食材を探している人</li>
                <li>地元の人々と交流したい人</li>
                <li>お財布を気にせず楽しみたい人</li>
              </Bullets>
              <Para>
                東山商店街は、新鮮な青果、魚介、精肉、生花など専門店が軒を連ねており、訪れる人を待っています。地元の人との温かい会
                <br />
                話も楽しめ、じっくりと品定めができる対面販売はこの商店街の醍醐味です。
              </Para>
              <Band>訪れる際のポイント</Band>
              <Tip>早めの時間がおすすめ</Tip>
            </Body>
          </Column>
        </Pane>
      </Board>
    </>
  );
}
